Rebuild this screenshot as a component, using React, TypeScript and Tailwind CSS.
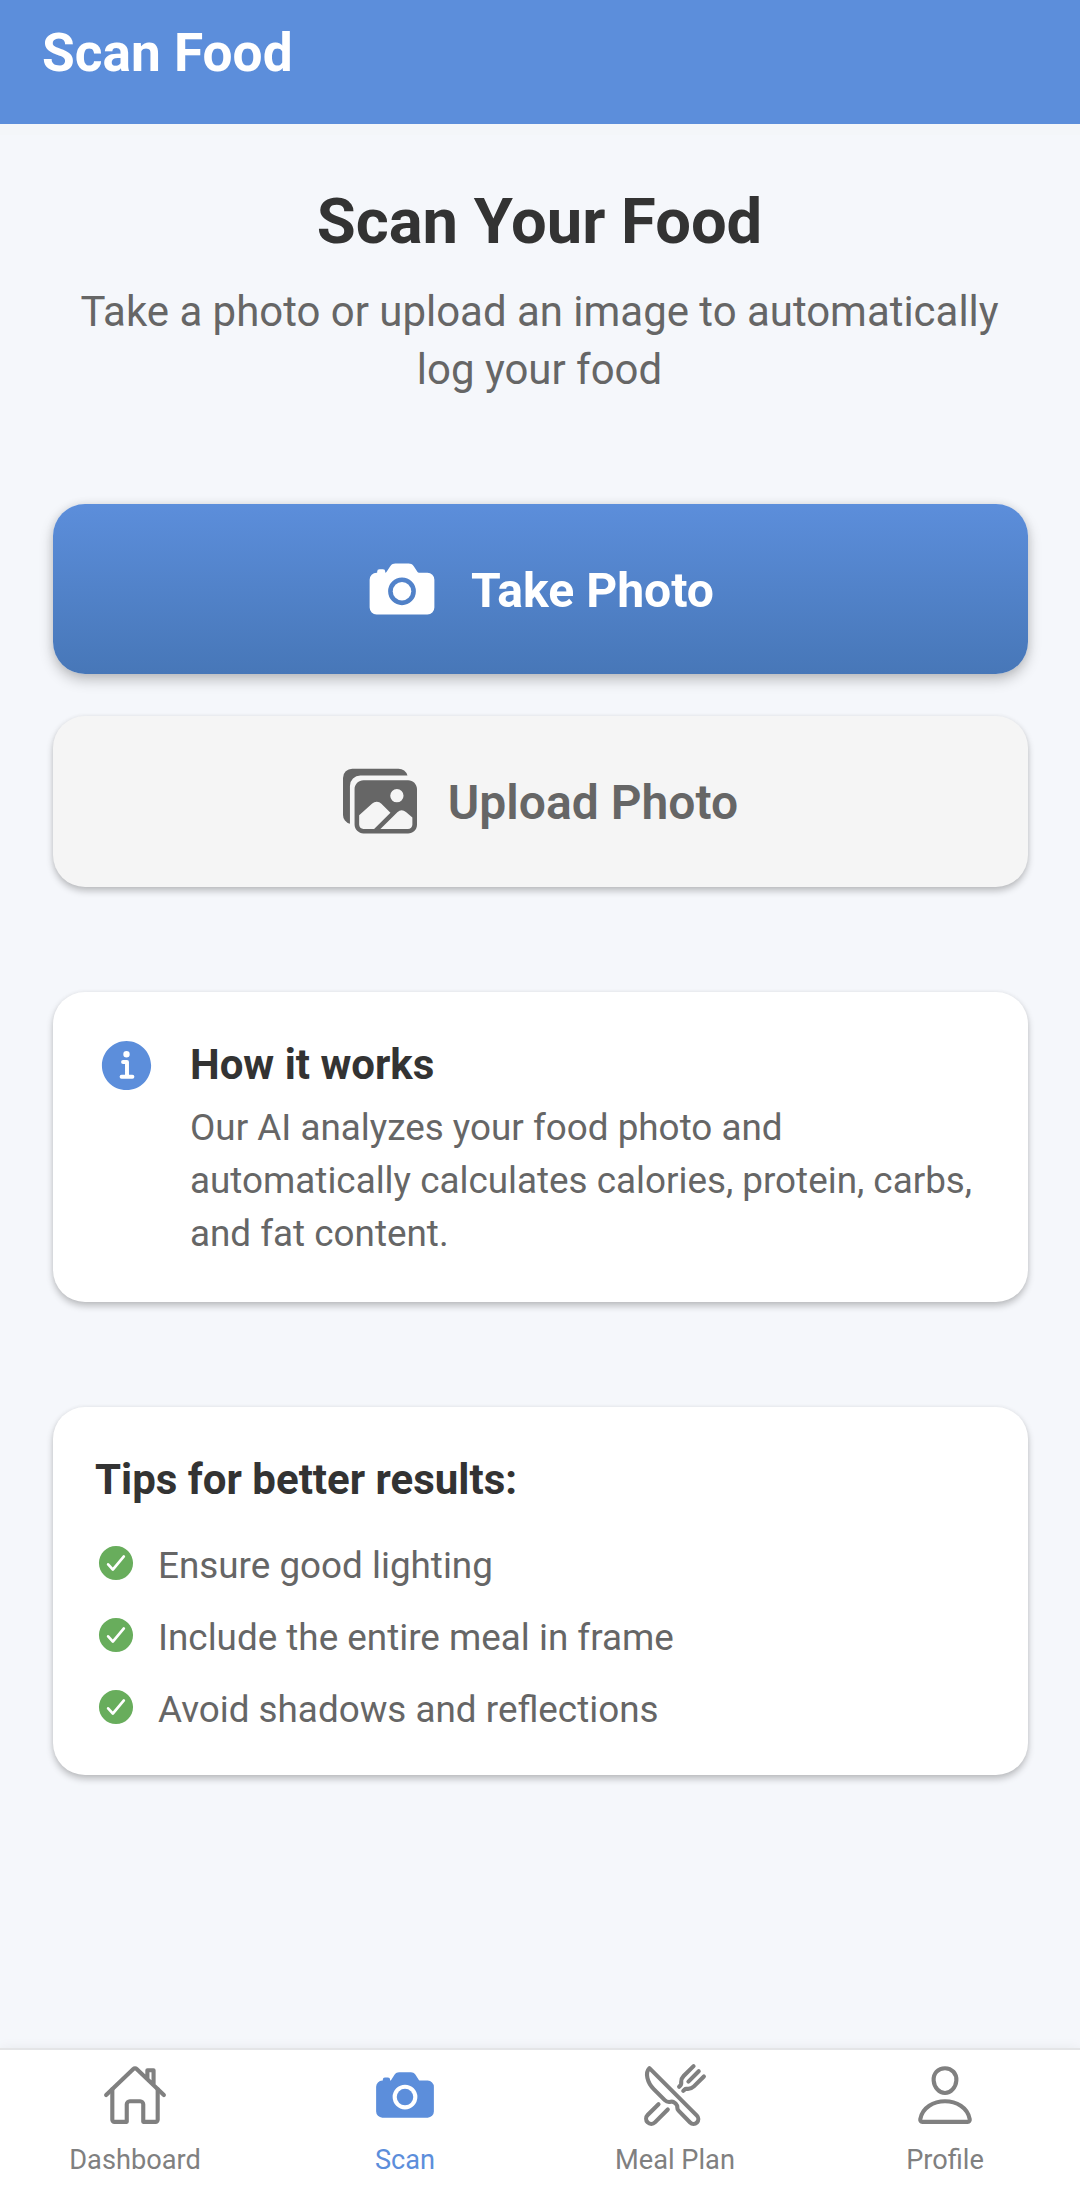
import { IoCamera, IoCheckmarkCircle, IoHomeOutline, IoImages, IoInformationCircle, IoPersonOutline, IoRestaurantOutline } from "react-icons/io5";

const tips = ["Ensure good lighting", "Include the entire meal in frame", "Avoid shadows and reflections"];

const tabs = [
  { label: "Dashboard", icon: IoHomeOutline, active: false },
  { label: "Scan", icon: IoCamera, active: true },
  { label: "Meal Plan", icon: IoRestaurantOutline, active: false },
  { label: "Profile", icon: IoPersonOutline, active: false },
];

const cardShadow = "shadow-[0_4px_7px_rgba(0,0,0,0.23),0_0_4px_rgba(0,0,0,0.05)]";

export default function App() {
  return (
    <div className="flex h-[2187px] w-[1080px] flex-col overflow-hidden bg-[#f5f7fb] font-['Roboto',sans-serif]">
      <header className="h-[124px] shrink-0 bg-[#5c8edb] px-[42px] shadow-[0_11px_0_#f4f6f9]">
        <h1 className="text-[53.2px] leading-[106px] font-bold text-white">Scan Food</h1>
      </header>

      <main className="flex flex-1 flex-col pr-[52px] pl-[53px] pt-[60px]">
        <div className="pr-[2px] text-center">
          <h2 className="text-[63.3px] leading-[74px] font-bold text-[#333333]">Scan Your Food</h2>
          <p className="mt-[25px] text-[41.95px] leading-[58px] text-[#666666]">
            Take a photo or upload an image to automatically
            <br />
            log your food
          </p>
        </div>

        {/* Actions */}
        <div className="mt-[105px] flex flex-col gap-[42px]">
          <button className="flex h-[170px] items-center justify-center gap-[32px] rounded-[32px] bg-linear-to-b from-[#5c8edb] to-[#4777b8] pr-[2px] text-white shadow-[0_6px_14px_rgba(0,0,0,0.23),0_0_8px_rgba(0,0,0,0.08)]">
            <IoCamera className="size-[74px]" />
            <span className="pt-1 text-[48.1px] leading-none font-bold">Take Photo</span>
          </button>
          <button className={`flex h-[171px] items-center justify-center gap-[31px] rounded-[32px] bg-[#f5f5f5] pb-[2px] text-[#666666] ${cardShadow}`}>
            <IoImages className="size-[74px]" />
            <span className="pt-1 text-[48px] leading-none font-semibold">Upload Photo</span>
          </button>
        </div>

        {/* How it works */}
        <section className={`mt-[105px] flex h-[310px] gap-[32px] rounded-[32px] bg-white p-[42px] ${cardShadow}`}>
          <IoInformationCircle className="size-[63px] shrink-0 text-[#5c8edb]" />
          <div className="pt-1">
            <h3 className="text-[42px] leading-[53px] font-bold text-[#333333]">How it works</h3>
            <p className="mt-[10px] text-[36.85px] leading-[53px] text-[#666666]">
              Our AI analyzes your food photo and
              <br />
              automatically calculates calories, protein, carbs,
              <br />
              and fat content.
            </p>
          </div>
        </section>

        {/* Tips */}
        <section className={`mt-[105px] h-[368px] rounded-[32px] bg-white px-[42px] pt-[48px] ${cardShadow}`}>
          <h3 className="text-[42px] leading-[50px] font-bold text-[#333333]">Tips for better results:</h3>
          <ul className="mt-[22px]">
            {tips.map((tip) => (
              <li key={tip} className="flex h-[72px] items-center gap-[21px]">
                <IoCheckmarkCircle className="size-[42px] text-[#68ad5c]" />
                <span className="pt-[6px] text-[36.85px] leading-none text-[#666666]">{tip}</span>
              </li>
            ))}
          </ul>
        </section>
      </main>

      <nav className="flex h-[139px] shrink-0 border-t-2 border-[#e4e5e7] bg-white shadow-[0_0_12px_rgba(0,0,0,0.06)]">
        {tabs.map((tab) => (
          <div key={tab.label} className={`flex flex-1 flex-col items-center pt-[12px] ${tab.active ? "text-[#5c8edb]" : "text-[#808080]"}`}>
            <tab.icon className="size-[66px]" />
            <span className="mt-[16px] text-[27.2px] leading-[32px]">{tab.label}</span>
          </div>
        ))}
      </nav>
    </div>
  );
}
